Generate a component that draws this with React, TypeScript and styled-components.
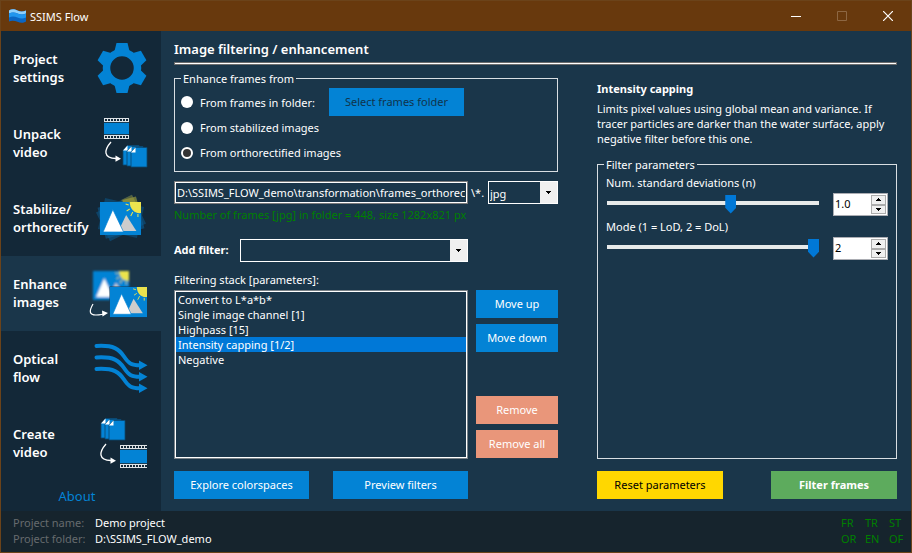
import React, { useState } from 'react';
import styled, { createGlobalStyle } from 'styled-components';

const color = {
  frame: '#6b431a',
  title: '#68390d',
  side: '#132838',
  main: '#1a364a',
  footer: '#16242d',
  blue: '#0383d5',
  accent: '#0078d7',
  line: '#d8dee2',
  green: '#008000',
};

const GlobalStyle = createGlobalStyle`
  * { box-sizing: border-box; }
  body { margin: 0; background: ${color.main}; }
  body, button, input, select {
    font-family: 'Noto Sans', 'Open Sans', sans-serif;
    font-size: 11px;
    line-height: 15px;
    color: #fff;
  }
`;

const Window = styled.div`
  min-height: 100vh;
  display: flex;
  flex-direction: column;
  border: 1px solid ${color.frame};
  background: ${color.main};
`;

const TitleBar = styled.header`
  display: flex;
  align-items: center;
  height: 30px;
  padding-left: 8px;
  background: ${color.title};
`;

const AppName = styled.h1`
  flex: 1;
  margin: 0 0 0 4px;
  font-size: 11px;
  font-weight: 400;
`;

const CaptionButton = styled.button`
  display: grid;
  place-items: center;
  width: 46px;
  height: 30px;
  padding: 0;
  border: 0;
  background: none;
`;

const Body = styled.div`
  flex: 1;
  display: flex;
`;

const Sidebar = styled.nav`
  width: 160px;
  display: flex;
  flex-direction: column;
  background: ${color.side};
`;

const Step = styled.button<{ $active?: boolean }>`
  display: flex;
  align-items: center;
  justify-content: space-between;
  height: 75px;
  padding: 0 13px 2px 12px;
  border: 0;
  text-align: left;
  font-size: 13px;
  font-weight: 600;
  line-height: 18px;
  white-space: pre;
  background: ${(p) => (p.$active ? color.main : color.side)};

  svg { flex: none; margin-left: -12px; }
`;

const About = styled.a`
  align-self: center;
  margin-right: 8px;
  padding: 6px 0;
  font-size: 13px;
  line-height: 18px;
  color: ${color.blue};
  text-decoration: none;
`;

const Main = styled.main`
  flex: 1;
  min-width: 0;
  display: flex;
  flex-direction: column;
  padding: 9px 14px 12px 13px;
`;

const Heading = styled.h2`
  margin: 0;
  padding-bottom: 4px;
  font-size: 13px;
  font-weight: 600;
  line-height: 18px;
`;

const Rule = styled.hr`
  width: 100%;
  height: 3px;
  margin: 0;
  border: 1px solid #6c6c6c;
  background: #fff;
`;

const Columns = styled.div`
  flex: 1;
  display: grid;
  grid-template-columns: 384fr 300fr;
  column-gap: 39px;
  padding-top: 6px;
`;

const Column = styled.div`
  min-width: 0;
  display: flex;
  flex-direction: column;
`;

const Group = styled.fieldset<{ $fill?: boolean }>`
  flex: ${(p) => (p.$fill ? 1 : 'none')};
  min-width: 0;
  margin: 0;
  padding: 0 8px 6px 6px;
  border: 1px solid ${color.line};
`;

const Legend = styled.legend`
  padding: 0 2px;
`;

const Choice = styled.div`
  display: flex;
  align-items: center;
  height: 25px;

  label { margin-left: 7px; }
  button { flex: none; margin-left: 14px; }
`;

const FirstChoice = styled(Choice)`
  height: 26px;
  margin-top: 3px;
`;

const Radio = styled.input.attrs({ type: 'radio' })`
  appearance: none;
  width: 12px;
  height: 12px;
  margin: 0;
  border-radius: 50%;
  background: #fff;

  &:checked {
    border: 2px solid #fff;
    background: #333;
  }
`;

type Tone = 'primary' | 'danger' | 'warning' | 'success';
const tones: Record<Tone, string> = {
  primary: color.blue,
  danger: '#e9967a',
  warning: '#ffd700',
  success: '#5dab5d',
};

const Action = styled.button<{ $tone?: Tone; $size?: 'small' | 'medium' | 'large' }>`
  width: ${(p) => ({ small: 82, medium: 126, large: 135 })[p.$size ?? 'large']}px;
  height: 28px;
  padding: 0 0 2px;
  border: 0;
  background: ${(p) => tones[p.$tone ?? 'primary']};
  color: ${(p) => (p.$tone === 'warning' ? '#000' : '#fff')};
  font-weight: ${(p) => (p.$tone === 'success' ? 700 : 400)};

  &:disabled { color: #10344c; }
`;

const PathRow = styled.div`
  display: flex;
  align-items: center;
  margin-top: 9px;
`;

const PathInput = styled.input`
  flex: 1;
  min-width: 0;
  height: 23px;
  padding: 0 1px;
  border: 2px solid #fff;
  outline: 1px solid #7a7a7a;
  outline-offset: -1px;
  background: ${color.main};
`;

const Mask = styled.span`
  width: 20px;
  padding-left: 3px;
`;

const Note = styled.p`
  margin: 3px 0 0;
  color: ${color.green};
`;

const FilterRow = styled.div`
  display: flex;
  align-items: center;
  margin: 17px 90px 10px 0;

  label { width: 66px; padding-bottom: 2px; font-weight: 700; }
`;

const Combo = styled.span<{ $width?: number }>`
  flex: ${(p) => (p.$width ? 'none' : '1')};
  width: ${(p) => (p.$width ? `${p.$width}px` : 'auto')};
  display: grid;
  border: 1px solid #fff;

  > * { grid-area: 1 / 1; }
`;

const Select = styled.select`
  appearance: none;
  width: 100%;
  height: 21px;
  padding: 2px 20px 0 1px;
  border: 0;
  border-radius: 0;
  background: ${color.main};
`;

const Arrow = styled.span`
  justify-self: end;
  display: grid;
  place-items: center;
  width: 17px;
  background: #f0f0f0;
  pointer-events: none;
`;

const StackLabel = styled.label`
  margin-bottom: 3px;
`;

const StackRow = styled.div`
  flex: 1;
  display: flex;
  gap: 8px;
`;

const Stack = styled.select`
  flex: 1;
  min-width: 0;
  padding: 0;
  border: 2px solid #fff;
  border-radius: 0;
  outline: 1px solid #7a8288;
  outline-offset: -1px;
  background: ${color.main};
  overflow: hidden;

  option {
    min-height: 15px;
    padding: 0 2px;
    line-height: 15px;
  }

  option:checked { background: ${color.accent} linear-gradient(${color.accent}, ${color.accent}); color: #fff; }
`;

const StackActions = styled.div`
  display: flex;
  flex-direction: column;
  gap: 6px;
  padding-bottom: 1px;

  button:nth-child(3) { margin-top: auto; }
`;

const Footing = styled.div<{ $gap?: number }>`
  display: flex;
  justify-content: ${(p) => (p.$gap ? 'flex-start' : 'space-between')};
  gap: ${(p) => p.$gap ?? 0}px;
  margin-top: 12px;
`;

const FilterName = styled.h3`
  margin: 10px 0 5px;
  font-size: 11px;
  font-weight: 700;
  line-height: 15px;
`;

const Description = styled.p`
  margin: 0 0 11px;
`;

const ParamLabel = styled.label`
  display: block;
  margin: 3px 0 3px 2px;
`;

const ParamRow = styled.div`
  display: flex;
  gap: 14px;
  height: 23px;
`;

const Slider = styled.input.attrs({ type: 'range' })`
  appearance: none;
  flex: 1;
  min-width: 0;
  height: 19px;
  margin: 0 0 0 3px;
  background: none;

  &::-webkit-slider-runnable-track {
    height: 4px;
    background: #e7eaea;
  }

  &::-webkit-slider-thumb {
    appearance: none;
    width: 11px;
    height: 19px;
    margin-top: -6px;
    background: ${color.accent};
    clip-path: polygon(0 0, 100% 0, 100% 70%, 50% 100%, 0 70%);
  }
`;

const Spin = styled.span`
  display: flex;
  width: 55px;
  height: 23px;
  padding: 1px;
  border: 1px solid #abadb3;
  background: #fff;
`;

const SpinInput = styled.input`
  flex: 1;
  min-width: 0;
  height: 16px;
  padding: 0;
  border: 0;
  background: #fff;
  color: #000;
`;

const SpinButtons = styled.span`
  display: flex;
  flex-direction: column;
  width: 15px;

  button {
    flex: 1;
    display: grid;
    place-items: center;
    min-height: 0;
    padding: 0;
    border: 1px solid #acacac;
    background: #f0f0f0;
    line-height: 0;
  }
`;

const Footer = styled.footer`
  display: flex;
  justify-content: space-between;
  padding: 4px 4px 5px 12px;
  background: ${color.footer};
  line-height: 16px;
`;

const ProjectInfo = styled.dl`
  display: grid;
  grid-template-columns: 82px auto;
  margin: 0;
  line-height: 16px;

  dt { color: #666b6e; }
  dd { margin: 0; }
`;

const Flags = styled.div`
  display: grid;
  grid-template-columns: repeat(2, 24px) 18px;
  line-height: 16px;
  color: ${color.green};
`;

const Triangle = ({ up }: { up?: boolean }) => (
  <svg width="5" height="3" viewBox="0 0 5 3" shapeRendering="crispEdges" aria-hidden="true">
    <path d={up ? 'M0 3 2.5 0 5 3z' : 'M0 0h5L2.5 3z'} fill="#000" />
  </svg>
);

const Logo = () => (
  <svg width="17" height="14" viewBox="0 0 17 14" aria-hidden="true">
    <path d="M0 1.5c3-2 6-1 8.500 0s5 1.500 8.500 0v11c-3 2-6 1.300-8.500.3S3 11 0 12.500z" fill="#0b66c3" />
    <path d="M0 1.500c3-2 6-1 8.500 0s5 1.500 8.500 0v3c-3.500 1.800-6 1-8.500 0S3 3 0 4.500z" fill="#8fd0fb" />
    <path d="M0 4.500c3-1.500 6-1 8.500 0s5 1.800 8.500 0v4c-3.500 1.800-6 1-8.500 0S3 7 0 8.500z" fill="#2196ee" />
  </svg>
);

const Gear = () => (
  <svg width="52" height="52" viewBox="-26 -26 52 52" fill={color.blue} aria-hidden="true">
    <circle r="15.500" fill="none" stroke={color.blue} strokeWidth="7.500" />
    {[0, 60, 120, 180, 240, 300].map((a) => (
      <path key={a} d="M-7.500-17 -5.500-25H5.500L7.500-17z" transform={`rotate(${a})`} />
    ))}
  </svg>
);

const Film = ({ x, y, w, h }: { x: number; y: number; w: number; h: number }) => (
  <g transform={`translate(${x} ${y})`}>
    <rect width={w} height={h} fill="#dfe4e7" />
    <rect y="4" width={w} height={h - 8} fill={color.blue} />
    <path d={`M1 2H${w}M1 ${h - 2}H${w}`} stroke="#132838" strokeWidth="2" strokeDasharray="2 1" />
    <path d={`M0 4.500H${w}M0 ${h - 4.5}H${w}`} stroke="#173c55" strokeWidth="1" />
  </g>
);

const Pages = ({ x, y }: { x: number; y: number }) => (
  <g transform={`translate(${x} ${y})`} stroke="#0a4670" strokeWidth=".8">
    {[0, 4, 8].map((d) => (
      <g key={d}>
        <path d={`M${d} ${d / 4 + 5.500}l4.500-5H${d + 16}V${20 + d / 4}H${d}z`} fill={color.blue} />
        <path d={`M${d} ${d / 4 + 5.500}l4.500-5v5z`} fill="#fff" stroke="none" />
      </g>
    ))}
  </g>
);

const Curve = ({ x, y }: { x: number; y: number }) => (
  <g transform={`translate(${x} ${y})`}>
    <path d="M6 0C-1 8-2 16 11 16.500" fill="none" stroke="#fff" strokeWidth="1.300" />
    <path d="M10.500 13.500 16 16.800l-5.500 3z" fill="#fff" />
  </g>
);

const Unpack = () => (
  <svg width="52" height="52" viewBox="0 0 52 52" aria-hidden="true">
    <Film x={8} y={1} w={25} h={21} />
    <Curve x={9} y={25} />
    <Pages x={27} y={28} />
  </svg>
);

const Create = () => (
  <svg width="52" height="52" viewBox="0 0 52 52" aria-hidden="true">
    <Pages x={5} y={1} />
    <Curve x={4} y={27} />
    <Film x={24} y={28} w={27} h={23} />
  </svg>
);

const Photo = ({ w, h }: { w: number; h: number }) => (
  <svg width={w} height={h} viewBox="0 0 40 33" preserveAspectRatio="none" overflow="visible">
    <rect width="40" height="33" fill={color.blue} />
    <path d="M29 0h11v11C34 12 29 7 29 0z" fill="#ebe34e" />
    <path d="M28 3l-3-1M29 7l-3 2M32 10l-2 4M37 12v3" stroke="#ebe34e" strokeWidth="1" />
    <path d="M18 29 25.500 13 35.500 29z" fill="#ccc" />
    <path d="M3 30 12.500 7.500 23 30z" fill="#fff" stroke={color.blue} strokeWidth=".7" />
  </svg>
);

const Stabilize = () => (
  <svg width="52" height="52" viewBox="0 0 52 52" aria-hidden="true">
    <g transform="rotate(-26 25 26)" opacity=".3">
      <rect x="5" y="10" width="40" height="32" fill={color.blue} />
      <rect x="33" y="10" width="12" height="10" fill="#ebe34e" />
    </g>
    <g transform="rotate(-15 25 26)" opacity=".6">
      <rect x="5" y="10" width="40" height="32" fill="#0a5b92" />
      <rect x="31" y="9" width="14" height="10" fill="#a8a63a" />
    </g>
    <g transform="rotate(13 25 26)" opacity=".5">
      <rect x="5" y="10" width="40" height="32" fill="#0a5b92" />
    </g>
    <g transform="translate(4 10)"><Photo w={41} h={33} /></g>
  </svg>
);

const Enhance = () => (
  <svg width="60" height="52" viewBox="0 0 60 52" aria-hidden="true">
    <defs>
      <filter id="soft"><feGaussianBlur stdDeviation="1.200" /></filter>
    </defs>
    <g transform="translate(5 4)" filter="url(#soft)"><Photo w={36} h={29} /></g>
    <path d="M21.500 19.500H59V51H21.500z" fill="#123a58" />
    <g transform="translate(22 20)"><Photo w={37} h={30} /></g>
    <path d="M5 37C1 44 1 48 8 48s8-1 10-2" fill="none" stroke="#fff" strokeWidth="1.200" />
    <path d="M14 43.500 20 46l-5.500 3.500z" fill="#fff" />
  </svg>
);

const Flow = () => (
  <svg width="54" height="52" viewBox="0 0 54 52" aria-hidden="true">
    {[0, 11.5, 23].map((d) => (
      <g key={d} transform={`translate(0 ${d})`}>
        <path d="M2.500 4C20 3 25 7 30 14.500S38 23.300 46 23.300" fill="none" stroke={color.blue} strokeWidth="4" strokeLinecap="round" />
        <path d="M45 18.500 53.500 23.300 45 28z" fill={color.blue} />
      </g>
    ))}
  </svg>
);

const steps = [
  { label: 'Project\nsettings', icon: <Gear /> },
  { label: 'Unpack\nvideo', icon: <Unpack /> },
  { label: 'Stabilize/\northorectify', icon: <Stabilize /> },
  { label: 'Enhance\nimages', icon: <Enhance />, active: true },
  { label: 'Optical\nflow', icon: <Flow /> },
  { label: 'Create\nvideo', icon: <Create /> },
];

const filters = ['Convert to L*a*b*', 'Single image channel [1]', 'Highpass [15]', 'Intensity capping [1/2]', 'Negative'];

type ParamProps = { id: string; label: string; min: number; max: number; step: number; initial: number; digits: number };

function Param({ id, label, min, max, step, initial, digits }: ParamProps) {
  const [value, setValue] = useState(initial);
  const change = (next: number) => setValue(Math.min(max, Math.max(min, next)));
  return (
    <div>
      <ParamLabel htmlFor={id}>{label}</ParamLabel>
      <ParamRow>
        <Slider id={id} min={min} max={max} step={step} value={value} onChange={(e) => change(Number(e.target.value))} />
        <Spin>
          <SpinInput aria-label={label} value={value.toFixed(digits)} onChange={(e) => change(Number(e.target.value) || min)} />
          <SpinButtons>
            <button type="button" aria-label="Increase" onClick={() => change(value + step)}><Triangle up /></button>
            <button type="button" aria-label="Decrease" onClick={() => change(value - step)}><Triangle /></button>
          </SpinButtons>
        </Spin>
      </ParamRow>
    </div>
  );
}

export default function App() {
  const [source, setSource] = useState('ortho');
  const [selected, setSelected] = useState(filters[3]);
  const radio = (id: string) => ({ id, name: 'source', checked: source === id, onChange: () => setSource(id) });

  return (
    <Window>
      <GlobalStyle />
      <TitleBar>
        <Logo />
        <AppName>SSIMS Flow</AppName>
        <CaptionButton aria-label="Minimize">
          <svg width="10" height="10"><path d="M0 5.500h10" stroke="#fff" /></svg>
        </CaptionButton>
        <CaptionButton aria-label="Maximize" disabled>
          <svg width="10" height="10"><path d="M.5.5h9v9h-9z" fill="none" stroke="#8d6743" /></svg>
        </CaptionButton>
        <CaptionButton aria-label="Close">
          <svg width="10" height="10"><path d="M0 0l10 10M10 0 0 10" stroke="#fff" strokeWidth="1.200" /></svg>
        </CaptionButton>
      </TitleBar>

      <Body>
        <Sidebar>
          {steps.map((s) => (
            <Step key={s.label} $active={s.active}>
              <span>{s.label}</span>
              {s.icon}
            </Step>
          ))}
          <About href="#about">About</About>
        </Sidebar>

        <Main>
          <Heading>Image filtering / enhancement</Heading>
          <Rule />
          <Columns>
            <Column>
              <Group>
                <Legend>Enhance frames from</Legend>
                <FirstChoice>
                  <Radio {...radio('frames')} />
                  <label htmlFor="frames">From frames in folder:</label>
                  <Action disabled>Select frames folder</Action>
                </FirstChoice>
                <Choice>
                  <Radio {...radio('stabilized')} />
                  <label htmlFor="stabilized">From stabilized images</label>
                </Choice>
                <Choice>
                  <Radio {...radio('ortho')} />
                  <label htmlFor="ortho">From orthorectified images</label>
                </Choice>
              </Group>
              <PathRow>
                <PathInput aria-label="Frames folder" defaultValue="D:\SSIMS_FLOW_demo\transformation\frames_orthorectified" />
                <Mask>\*.</Mask>
                <Combo $width={70}>
                  <Select aria-label="Image extension"><option>jpg</option></Select>
                  <Arrow><Triangle /></Arrow>
                </Combo>
              </PathRow>
              <Note>Number of frames [jpg] in folder = 448, size 1282x821 px</Note>
              <FilterRow>
                <label htmlFor="add-filter">Add filter:</label>
                <Combo>
                  <Select id="add-filter"><option></option></Select>
                  <Arrow><Triangle /></Arrow>
                </Combo>
              </FilterRow>
              <StackLabel htmlFor="stack">Filtering stack [parameters]:</StackLabel>
              <StackRow>
                <Stack id="stack" size={5} value={selected} onChange={(e) => setSelected(e.target.value)}>
                  {filters.map((f) => <option key={f}>{f}</option>)}
                </Stack>
                <StackActions>
                  <Action $size="small">Move up</Action>
                  <Action $size="small">Move down</Action>
                  <Action $size="small" $tone="danger">Remove</Action>
                  <Action $size="small" $tone="danger">Remove all</Action>
                </StackActions>
              </StackRow>
              <Footing $gap={24}>
                <Action>Explore colorspaces</Action>
                <Action>Preview filters</Action>
              </Footing>
            </Column>

            <Column>
              <FilterName>Intensity capping</FilterName>
              <Description>
                Limits pixel values using global mean and variance. If tracer particles are darker than the water
                surface, apply negative filter before this one.
              </Description>
              <Group $fill>
                <Legend>Filter parameters</Legend>
                <Param id="deviations" label="Num. standard deviations (n)" min={0} max={1.7} step={0.1} initial={1} digits={1} />
                <Param id="mode" label="Mode (1 = LoD, 2 = DoL)" min={1} max={2} step={1} initial={2} digits={0} />
              </Group>
              <Footing>
                <Action $size="medium" $tone="warning">Reset parameters</Action>
                <Action $size="medium" $tone="success">Filter frames</Action>
              </Footing>
            </Column>
          </Columns>
        </Main>
      </Body>

      <Footer>
        <ProjectInfo>
          <dt>Project name:</dt>
          <dd>Demo project</dd>
          <dt>Project folder:</dt>
          <dd>D:\SSIMS_FLOW_demo</dd>
        </ProjectInfo>
        <Flags>
          <span>FR</span><span>TR</span><span>ST</span>
          <span>OR</span><span>EN</span><span>OF</span>
        </Flags>
      </Footer>
    </Window>
  );
}
